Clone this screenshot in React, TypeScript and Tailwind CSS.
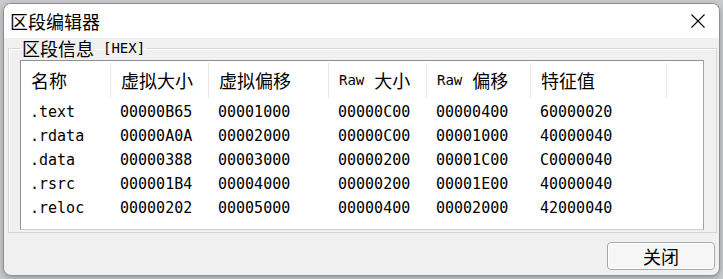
import React from 'react';

const CJK = "font-['Noto_Sans_CJK_SC',_'Noto_Sans',_sans-serif]";
const MONO = "font-['DejaVu_Sans_Mono',_'Liberation_Mono',_monospace]";

const columns = [
  { key: 'name', width: 'w-[90px]' },
  { key: 'vsize', width: 'w-[98px]' },
  { key: 'voff', width: 'w-[120px]' },
  { key: 'rsize', width: 'w-[98px]' },
  { key: 'roff', width: 'w-[104px]' },
  { key: 'flags', width: 'w-[136px]' },
];

const sections = [
  ['.text', '00000B65', '00001000', '00000C00', '00000400', '60000020'],
  ['.rdata', '00000A0A', '00002000', '00000C00', '00001000', '40000040'],
  ['.data', '00000388', '00003000', '00000200', '00001C00', 'C0000040'],
  ['.rsrc', '000001B4', '00004000', '00000200', '00001E00', '40000040'],
  ['.reloc', '00000202', '00005000', '00000400', '00002000', '42000040'],
];

function RawLabel({ label }: { label: string }) {
  return (
    <span className="flex items-center">
      <span className={`${MONO} text-[14px]`}>Raw</span>
      <span className={`${CJK} text-[18px] ml-[10px]`}>{label}</span>
    </span>
  );
}

export default function App() {
  const headers: React.ReactNode[] = [
    <span className={`${CJK} text-[18px]`}>名称</span>,
    <span className={`${CJK} text-[18px]`}>虚拟大小</span>,
    <span className={`${CJK} text-[18px]`}>虚拟偏移</span>,
    <RawLabel label="大小" />,
    <RawLabel label="偏移" />,
    <span className={`${CJK} text-[18px]`}>特征值</span>,
  ];

  return (
    <div className="w-[723px] h-[279px] bg-[#c9cbcf] pt-[3px] pl-[3px] overflow-hidden">
      <div className="w-[717px] h-[273px] rounded-[8px] border border-[#8f8f8f] bg-[#f0f0f0] overflow-hidden flex flex-col shadow-[0_2px_6px_rgba(0,0,0,0.25)]">
        {/* Title bar */}
        <div className="h-[34px] bg-white flex items-center justify-between pl-[6px] pr-[13px] shrink-0">
          <span className={`${CJK} text-[18px] leading-none text-black`}>区段编辑器</span>
          <svg width="16" height="16" viewBox="0 0 16 16" className="text-black">
            <path d="M1.5 1.5L14.5 14.5M14.5 1.5L1.5 14.5" stroke="currentColor" strokeWidth="1.1" fill="none" />
          </svg>
        </div>

        {/* Body */}
        <div className="flex-1 flex flex-col pl-[4px] pr-[3px]">
          <fieldset className="w-[708px] border border-[#d6d6d6] pl-[11px] pr-[12px] pb-[2px] shadow-[inset_1px_1px_0_#ffffff]">
            <legend className="px-[2px] leading-[20px] flex items-center">
              <span className={`${CJK} text-[18px] text-black`}>区段信息</span>
              <span className={`${MONO} text-[14px] ml-[9px] text-black`}>[HEX]</span>
            </legend>

            {/* List view */}
            <div className="mt-[2px] h-[170px] w-[684px] bg-white border border-[#8c9099] border-b-[#c9ccd1] border-r-[#a0a3a8]">
              <div className="flex h-[39px] py-[2px]">
                {columns.map((c, i) => (
                  <div key={c.key} className={`${c.width} flex items-center pl-[10px] border-r border-[#e6e6e6] text-black`}>
                    {headers[i]}
                  </div>
                ))}
              </div>
              {sections.map((row) => (
                <div key={row[0]} className="flex h-[24px]">
                  {row.map((cell, i) => (
                    <div key={i} className={`${columns[i].width} flex items-center pl-[9px] ${MONO} text-[15px] text-black`}>
                      {cell}
                    </div>
                  ))}
                </div>
              ))}
            </div>
          </fieldset>

          <div className="flex justify-end mt-[9px] pr-[1px]">
            <button className={`w-[108px] h-[28px] rounded-[4px] border border-[#a8a8a8] bg-[#f6f6f6] shadow-[inset_0_0_0_1px_#ffffff] ${CJK} text-[18px] leading-none text-black`}>
              关闭
            </button>
          </div>
        </div>
      </div>
    </div>
  );
}
